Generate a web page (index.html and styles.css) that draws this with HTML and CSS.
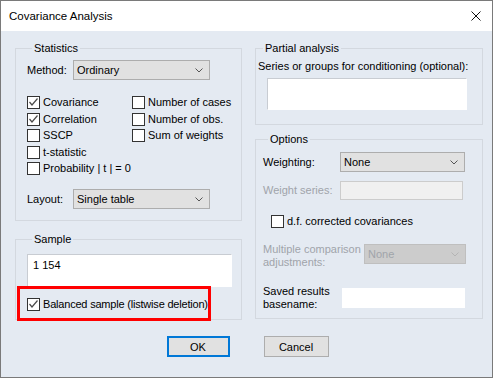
FILE: index.html
```html
<!DOCTYPE html>
<html lang="en">
<head>
  <meta charset="UTF-8">
  <title>Covariance Analysis</title>
  <link rel="stylesheet" href="styles.css">
</head>
<body>
  <div class="window">
    <div class="titlebar">
      <span class="title">Covariance Analysis</span>
      <svg class="close" width="10" height="10" viewBox="0 0 10 10">
        <path d="M0.5 0.5 L9.5 9.5 M9.5 0.5 L0.5 9.5" stroke="#111" stroke-width="1" fill="none"/>
      </svg>
    </div>

    <div class="dialog">
      <div class="columns">
        <div class="col">
          <fieldset class="group stats">
            <legend>Statistics</legend>
            <div class="row method">
              <span class="lbl">Method:</span>
              <div class="select wide">Ordinary
                <svg class="arrow" width="8" height="5" viewBox="0 0 8 5"><polyline points="0.5,0.5 4,4 7.5,0.5" /></svg>
              </div>
            </div>
            <div class="checks">
              <label class="check"><span class="box on"><svg viewBox="0 0 11 11"><polyline points="1.5,5 4,8 9.5,1.5" /></svg></span>Covariance</label>
              <label class="check"><span class="box"></span>Number of cases</label>
              <label class="check"><span class="box on"><svg viewBox="0 0 11 11"><polyline points="1.5,5 4,8 9.5,1.5" /></svg></span>Correlation</label>
              <label class="check"><span class="box"></span>Number of obs.</label>
              <label class="check"><span class="box"></span>SSCP</label>
              <label class="check"><span class="box"></span>Sum of weights</label>
              <label class="check"><span class="box"></span>t-statistic</label>
              <span></span>
              <label class="check wide-check"><span class="box"></span>Probability | t | = 0</label>
            </div>
            <div class="row layout">
              <span class="lbl">Layout:</span>
              <div class="select wide">Single table
                <svg class="arrow" width="8" height="5" viewBox="0 0 8 5"><polyline points="0.5,0.5 4,4 7.5,0.5" /></svg>
              </div>
            </div>
          </fieldset>

          <fieldset class="group sample">
            <legend>Sample</legend>
            <div class="textbox sample-box">1 154</div>
            <div class="highlight">
              <label class="check"><span class="box on"><svg viewBox="0 0 11 11"><polyline points="1.5,5 4,8 9.5,1.5" /></svg></span>Balanced sample (listwise deletion)</label>
            </div>
          </fieldset>
        </div>

        <div class="col">
          <fieldset class="group partial">
            <legend>Partial analysis</legend>
            <div class="hint">Series or groups for conditioning (optional):</div>
            <div class="textbox series-box"></div>
          </fieldset>

          <fieldset class="group options">
            <legend>Options</legend>
            <div class="row weighting">
              <span class="lbl">Weighting:</span>
              <div class="select mid">None
                <svg class="arrow" width="8" height="5" viewBox="0 0 8 5"><polyline points="0.5,0.5 4,4 7.5,0.5" /></svg>
              </div>
            </div>
            <div class="row weight-series">
              <span class="lbl disabled">Weight series:</span>
              <div class="input off"></div>
            </div>
            <div class="row df">
              <label class="check"><span class="box"></span>d.f. corrected covariances</label>
            </div>
            <div class="row multi">
              <span class="lbl two disabled">Multiple comparison adjustments:</span>
              <div class="select off">None
                <svg class="arrow" width="8" height="5" viewBox="0 0 8 5"><polyline points="0.5,0.5 4,4 7.5,0.5" /></svg>
              </div>
            </div>
            <div class="row saved">
              <span class="lbl two">Saved results basename:</span>
              <div class="input"></div>
            </div>
          </fieldset>
        </div>
      </div>

      <div class="buttons">
        <button class="btn ok">OK</button>
        <button class="btn cancel">Cancel</button>
      </div>
    </div>
  </div>
</body>
</html>
```

FILE: styles.css
```css
html, body {
  margin: 0;
  padding: 0;
}

body {
  font-family: "Liberation Sans", Arial, sans-serif;
  font-size: 11px;
  color: #000;
}

.window {
  width: 493px;
  height: 378px;
  box-sizing: border-box;
  border: 1px solid #7a7a7a;
  background: #e4eaf2;
}

.titlebar {
  height: 30px;
  background: #fff;
  display: flex;
  align-items: center;
  justify-content: space-between;
  padding: 0 11px 0 8px;
}

.title {
  font-size: 11.5px;
  line-height: 16px;
}

.dialog {
  padding: 9px 9px 0 14px;
}

.columns {
  display: flex;
  gap: 13px;
  height: 280px;
}

.col {
  display: flex;
  flex-direction: column;
}

.col:first-child {
  width: 227px;
}

.col:last-child {
  width: 228px;
}

.group {
  box-sizing: border-box;
  margin: 0;
  padding: 0;
  min-width: 0;
  border: 1px solid #d3d8df;
}

.group legend {
  margin-left: 5px;
  padding: 0 2px;
  line-height: 16px;
}

.row {
  display: flex;
  align-items: center;
}

.lbl {
  line-height: 15px;
  white-space: nowrap;
}

.lbl.two {
  line-height: 13px;
  white-space: normal;
}

.disabled {
  color: #a0a4aa;
}

/* selects */
.select {
  position: relative;
  box-sizing: border-box;
  height: 20px;
  line-height: 18px;
  padding-left: 3px;
  background: #e1e1e1;
  border: 1px solid #adadad;
}

.select .arrow {
  position: absolute;
  right: 6px;
  top: 7px;
  fill: none;
  stroke: #555;
  stroke-width: 1;
}

.select.off {
  background: #cccccc;
  border-color: #bfbfbf;
  color: #a0a4aa;
  width: 102px;
}

.select.off .arrow {
  stroke: #b4b4b4;
}

.select.wide {
  width: 137px;
}

.select.mid {
  width: 125px;
}

.input {
  box-sizing: border-box;
  height: 20px;
  background: #fff;
  border: 1px solid #fff;
}

.input.off {
  background: #f0f0f0;
  border-color: #cccccc;
  width: 123px;
  height: 19px;
}

.textbox {
  box-sizing: border-box;
  background: #fff;
  border: 1px solid #fff;
  border-top-color: #c8ccd2;
  border-left-color: #c8ccd2;
}

/* checkboxes */
.check {
  display: flex;
  align-items: flex-start;
  line-height: 15px;
  white-space: nowrap;
}

.box {
  box-sizing: border-box;
  width: 13px;
  height: 13px;
  margin: 1px 3px 0 0;
  border: 1px solid #333;
  background: #fff;
  flex: none;
}

.box svg {
  display: block;
  width: 11px;
  height: 11px;
  fill: none;
  stroke: #4a4a4a;
  stroke-width: 1.2;
}

/* statistics */
.stats {
  height: 181px;
  padding: 0 0 0 11px;
}

.method {
  margin-top: 4px;
}

.method .lbl,
.layout .lbl {
  width: 46px;
}

.checks {
  display: grid;
  grid-template-columns: 105px auto;
  grid-auto-rows: 16.5px;
  margin-top: 15px;
}

.wide-check {
  grid-column: span 2;
}

.layout {
  margin-top: 11.5px;
}

/* sample */
.sample {
  height: 89px;
  margin-top: 10px;
  padding: 0 0 0 11px;
}

.sample-box {
  width: 205px;
  height: 33px;
  margin-top: 7px;
  padding: 3px 0 0 5px;
  line-height: 15px;
}

.highlight {
  box-sizing: border-box;
  width: 194px;
  height: 35px;
  margin: -1px 0 0 -10px;
  border: 3px solid #ff0000;
  padding: 8px 0 0 7px;
  letter-spacing: -0.2px;
}

/* partial analysis */
.partial {
  height: 85px;
  padding: 0 0 0 2px;
}

.hint {
  margin-top: 3px;
  line-height: 15px;
  white-space: nowrap;
}

.series-box {
  width: 200px;
  height: 32px;
  margin: 4px 0 0 9px;
}

/* options */
.options {
  height: 188px;
  margin-top: 6px;
  padding: 0 0 0 7px;
}

.weighting {
  margin-top: 5px;
}

.weighting .lbl,
.weight-series .lbl {
  width: 77px;
}

.weight-series {
  margin-top: 9px;
}

.df {
  height: 17px;
  margin-top: 13px;
  padding-left: 8px;
}

.multi {
  height: 26px;
  margin-top: 11px;
}

.multi .lbl {
  width: 101px;
  padding-top: 3px;
}

.saved {
  height: 26px;
  margin-top: 18px;
}

.saved .lbl {
  width: 79px;
}

.saved .input {
  width: 123px;
}

/* buttons */
.buttons {
  display: flex;
  justify-content: center;
  gap: 34px;
  margin-top: 16px;
  padding-right: 3px;
}

.btn {
  box-sizing: border-box;
  height: 21px;
  background: #e1e1e1;
  border: 1px solid #adadad;
  font-family: inherit;
  font-size: 11px;
  color: #000;
  padding: 0;
}

.btn.ok {
  width: 63px;
  border: 2px solid #0078d7;
}

.btn.cancel {
  width: 65px;
}
```
